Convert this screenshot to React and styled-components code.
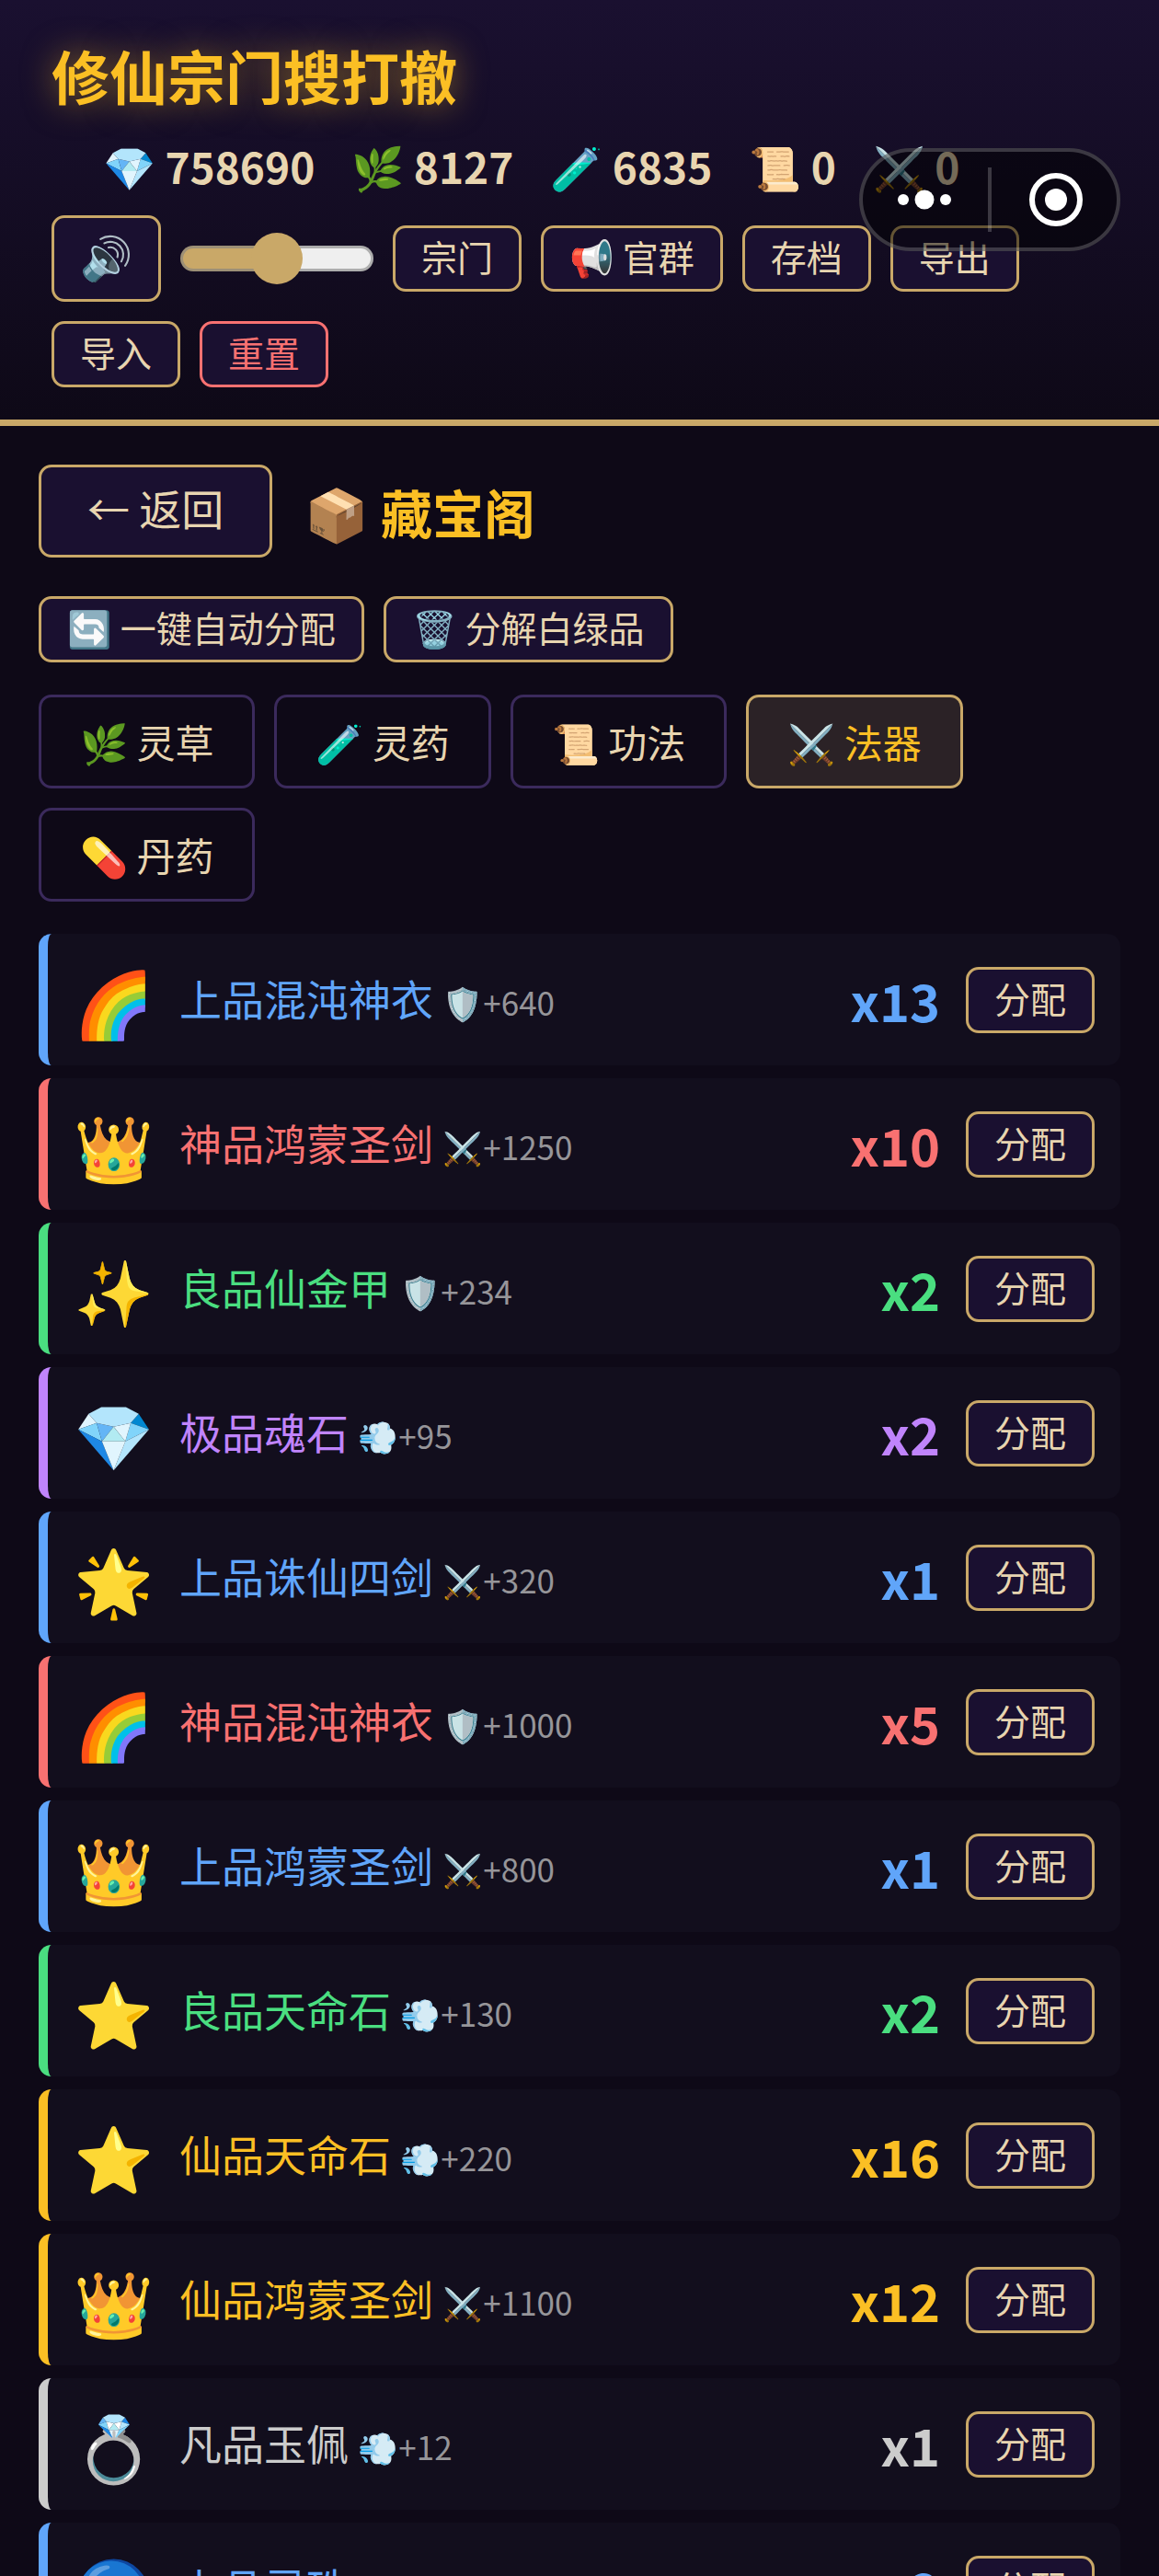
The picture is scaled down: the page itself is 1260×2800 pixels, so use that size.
import styled, { createGlobalStyle } from 'styled-components';

const GlobalStyle = createGlobalStyle`
  * { box-sizing: border-box; }
  body {
    margin: 0;
    background: #0e0917;
    color: #e8d5b0;
    font-family: "Noto Sans CJK SC", "Noto Sans", sans-serif;
  }
  button { font-family: inherit; }
`;

const Page = styled.div`
  height: 100vh;
  overflow-y: auto;
  scrollbar-width: none;
`;

const Header = styled.header`
  display: flex;
  flex-direction: column;
  padding: 35px 56px;
  border-bottom: 7px solid #c9a868;
  background: linear-gradient(180deg, #1a1030 0%, #0e0917 100%);
`;

const Brand = styled.h1`
  margin: 0;
  font-size: 63px;
  line-height: 91px;
  font-weight: 700;
  color: #fbbf24;
  text-shadow: 0 0 35px rgba(251, 191, 36, 0.5);
`;

const Stats = styled.ul`
  display: flex;
  flex-wrap: wrap;
  gap: 40px;
  margin: 21px 0;
  padding: 0 0 0 56px;
  list-style: none;
`;

const Stat = styled.li`
  font-size: 46px;
  line-height: 66px;
  font-weight: 700;
`;

const Controls = styled.div`
  display: flex;
  flex-wrap: wrap;
  align-items: center;
  gap: 21px;
`;

const Button = styled.button`
  padding: 2px 28px 8px;
  border: 3px solid ${(p) => (p.$danger ? '#f87171' : '#c9a868')};
  border-radius: 14px;
  background: #1a1030;
  color: ${(p) => (p.$danger ? '#f87171' : '#e8d5b0')};
  font-size: 39px;
  line-height: 56px;
  white-space: nowrap;
`;

const SoundButton = styled(Button)`
  padding: 10px 28px 18px;
  font-size: 46px;
  line-height: 60px;
`;

const BackButton = styled(Button)`
  padding: 10px 50px 18px;
  font-size: 46px;
  line-height: 67px;
`;

const Volume = styled.input`
  appearance: none;
  width: 210px;
  height: 28px;
  margin: 0;
  border: 3px solid rgba(128, 128, 128, 0.6);
  border-radius: 14px;
  background: linear-gradient(90deg, #c9a868 50%, #efefef 50%) border-box;

  &::-webkit-slider-thumb {
    appearance: none;
    width: 56px;
    height: 56px;
    border-radius: 50%;
    background: #c9a868;
  }
`;

const Main = styled.main`
  display: flex;
  flex-direction: column;
  gap: 35px;
  padding: 42px;
`;

const TitleBar = styled.div`
  display: flex;
  align-items: center;
  gap: 35px;
  margin-bottom: 7px;
`;

const Title = styled.h2`
  margin: 0;
  font-size: 56px;
  line-height: 81px;
  font-weight: 700;
  color: #fbbf24;
`;

const Row = styled.div`
  display: flex;
  flex-wrap: wrap;
  gap: 21px;
`;

const Tab = styled.button`
  padding: 17px 42px;
  border: 3px solid ${(p) => (p.$active ? '#c9a868' : '#3b2a5c')};
  border-radius: 14px;
  background: ${(p) => (p.$active ? '#2b2226' : 'transparent')};
  color: ${(p) => (p.$active ? '#fbbf24' : '#e8d5b0')};
  font-size: 42px;
  line-height: 62px;
  white-space: nowrap;
`;

const List = styled.ul`
  display: flex;
  flex-direction: column;
  gap: 14px;
  margin: 0;
  padding: 0;
  list-style: none;
`;

const Item = styled.li`
  display: flex;
  align-items: center;
  gap: 28px;
  padding: 21px 28px;
  border-left: 10px solid ${(p) => p.$tone};
  border-radius: 14px;
  background: #120e1d;
  color: ${(p) => p.$tone};
`;

const Icon = styled.span`
  font-size: 70px;
  line-height: 101px;
`;

const Name = styled.span`
  flex: 1;
  font-size: 46px;
  line-height: 66px;
`;

const Bonus = styled.small`
  font-size: 35px;
  color: #969599;
`;

const Count = styled.strong`
  font-size: 56px;
  line-height: 81px;
  font-weight: 700;
`;

const Capsule = styled.div`
  position: fixed;
  top: 161px;
  right: 42px;
  display: flex;
  align-items: center;
  width: 284px;
  height: 112px;
  border: 4px solid rgba(255, 255, 255, 0.2);
  border-radius: 56px;
  background: rgba(0, 0, 0, 0.5) border-box;
`;

const CapsuleButton = styled.button`
  display: flex;
  flex: 1;
  align-items: center;
  justify-content: center;
  padding: 0;
  border: 0;
  background: none;
`;

const Divider = styled.span`
  width: 4px;
  height: 70px;
  margin: 0 3px;
  background: rgba(255, 255, 255, 0.2);
`;

const TONES = {
  fan: '#cccccc',
  liang: '#4ade80',
  shang: '#60a5fa',
  ji: '#c084fc',
  xian: '#fbbf24',
  shen: '#f87171',
};

const STATS = ['💎 758690', '🌿 8127', '🧪 6835', '📜 0', '⚔️ 0'];
const TABS = ['🌿 灵草', '🧪 灵药', '📜 功法', '⚔️ 法器', '💊 丹药'];

const ITEMS = [
  { icon: '🌈', name: '上品混沌神衣', bonus: '🛡️+640', count: 13, tone: 'shang' },
  { icon: '👑', name: '神品鸿蒙圣剑', bonus: '⚔️+1250', count: 10, tone: 'shen' },
  { icon: '✨', name: '良品仙金甲', bonus: '🛡️+234', count: 2, tone: 'liang' },
  { icon: '💎', name: '极品魂石', bonus: '💨+95', count: 2, tone: 'ji' },
  { icon: '🌟', name: '上品诛仙四剑', bonus: '⚔️+320', count: 1, tone: 'shang' },
  { icon: '🌈', name: '神品混沌神衣', bonus: '🛡️+1000', count: 5, tone: 'shen' },
  { icon: '👑', name: '上品鸿蒙圣剑', bonus: '⚔️+800', count: 1, tone: 'shang' },
  { icon: '⭐', name: '良品天命石', bonus: '💨+130', count: 2, tone: 'liang' },
  { icon: '⭐', name: '仙品天命石', bonus: '💨+220', count: 16, tone: 'xian' },
  { icon: '👑', name: '仙品鸿蒙圣剑', bonus: '⚔️+1100', count: 12, tone: 'xian' },
  { icon: '💍', name: '凡品玉佩', bonus: '💨+12', count: 1, tone: 'fan' },
  { icon: '🔵', name: '上品灵珠', bonus: '💨+32', count: 2, tone: 'shang' },
];

export default function App() {
  return (
    <Page>
      <GlobalStyle />
      <Header>
        <Brand>修仙宗门搜打撤</Brand>
        <Stats>
          {STATS.map((s) => (
            <Stat key={s}>{s}</Stat>
          ))}
        </Stats>
        <Controls>
          <SoundButton aria-label="音效">🔊</SoundButton>
          <Volume type="range" min="0" max="100" defaultValue="50" aria-label="音量" />
          <Button>宗门</Button>
          <Button>📢 官群</Button>
          <Button>存档</Button>
          <Button>导出</Button>
          <Button>导入</Button>
          <Button $danger>重置</Button>
        </Controls>
      </Header>

      <Main>
        <TitleBar>
          <BackButton>← 返回</BackButton>
          <Title>📦 藏宝阁</Title>
        </TitleBar>
        <Row>
          <Button>🔄 一键自动分配</Button>
          <Button>🗑️ 分解白绿品</Button>
        </Row>
        <Row>
          {TABS.map((t) => (
            <Tab key={t} $active={t.endsWith('法器')}>
              {t}
            </Tab>
          ))}
        </Row>
        <List>
          {ITEMS.map((it) => (
            <Item key={it.name} $tone={TONES[it.tone]}>
              <Icon>{it.icon}</Icon>
              <Name>
                {it.name} <Bonus>{it.bonus}</Bonus>
              </Name>
              <Count>x{it.count}</Count>
              <Button>分配</Button>
            </Item>
          ))}
        </List>
      </Main>

      <Capsule>
        <CapsuleButton aria-label="更多">
          <svg width="60" height="24" viewBox="0 0 60 24" fill="#fff">
            <circle cx="7" cy="12" r="6" />
            <circle cx="30" cy="12" r="10.5" />
            <circle cx="53" cy="12" r="6" />
          </svg>
        </CapsuleButton>
        <Divider />
        <CapsuleButton aria-label="关闭">
          <svg width="60" height="60" viewBox="0 0 60 60">
            <circle cx="30" cy="30" r="26" fill="none" stroke="#fff" strokeWidth="6" />
            <circle cx="30" cy="30" r="12" fill="#fff" />
          </svg>
        </CapsuleButton>
      </Capsule>
    </Page>
  );
}
